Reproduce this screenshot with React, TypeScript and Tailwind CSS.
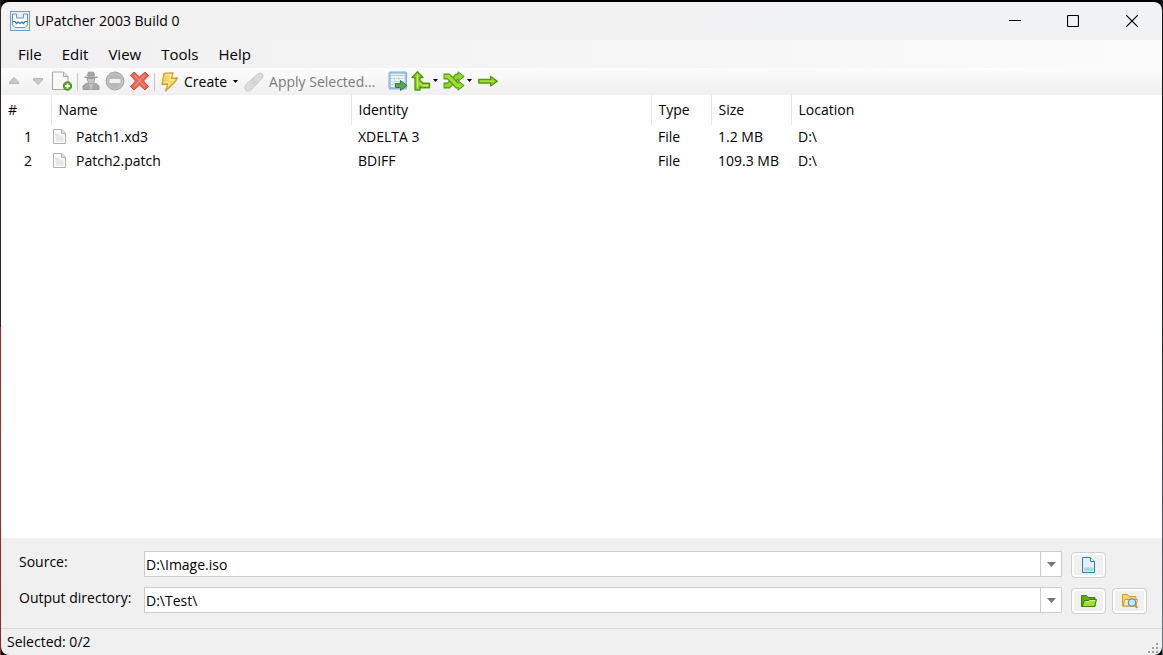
import React, { useState } from 'react';

const menus = ['File', 'Edit', 'View', 'Tools', 'Help'];

const patches = [
  { id: 1, name: 'Patch1.xd3', identity: 'XDELTA 3', type: 'File', size: '1.2 MB', location: 'D:\\' },
  { id: 2, name: 'Patch2.patch', identity: 'BDIFF', type: 'File', size: '109.3 MB', location: 'D:\\' },
];

const columns = [
  { label: 'Name', width: 'w-[300px]' },
  { label: 'Identity', width: 'w-[300px]' },
  { label: 'Type', width: 'w-[60px]' },
  { label: 'Size', width: 'w-[80px]' },
  { label: 'Location', width: 'w-auto' },
];

/* ---------- icons ---------- */

const AppLogo = () => (
  <svg className="size-5" viewBox="0 0 20 20" fill="none">
    <rect x="0.5" y="0.5" width="19" height="19" fill="#e6f0fa" stroke="#6d9fd3" />
    <path d="M2.500 3v11l2.500 2.500h10l2.500-2.500V3h-4v4h-7V3z" fill="#fff" stroke="#5f9ad6" />
    <path d="M3 10.500h2l1.500 2 1.500-1.500 2 1.500 2-1.500 1.500 1.500 1.500-2h2" stroke="#2f6fb4" strokeWidth="1.200" />
  </svg>
);

const UpIcon = () => (
  <svg className="size-5" viewBox="0 0 20 20">
    <path d="M10 6.500l4.500 4.500v1.500h-9V11z" fill="#c8c8c8" stroke="#b4b4b4" strokeLinejoin="round" />
  </svg>
);

const DownIcon = () => (
  <svg className="size-5" viewBox="0 0 20 20">
    <path d="M10 13.500L5.500 9V7.500h9V9z" fill="#c8c8c8" stroke="#b4b4b4" strokeLinejoin="round" />
  </svg>
);

const AddFileIcon = () => (
  <svg className="size-5" viewBox="0 0 20 20">
    <path d="M.5 1h11L16 5.500V18.500H.5z" fill="#f6f8f6" stroke="#a3a8a3" />
    <path d="M11.500 1v4.500H16" fill="#dfe3df" stroke="#a3a8a3" />
    <path d="M3 16.500V9l6-6" stroke="#fff" fill="none" />
    <circle cx="15.500" cy="15" r="4.200" fill="#5cab1c" stroke="#3c8a0c" />
    <path d="M15.500 12.500v5M13 15h5" stroke="#fff" strokeWidth="1.800" />
  </svg>
);

const AgentIcon = () => (
  <svg className="size-5" viewBox="0 0 20 20">
    <path d="M2 18.500v-3.500l3-2.500 3-.5h4l3 .5 3 2.500v3.500z" fill="#a9a9a9" stroke="#9b9b9b" />
    <path d="M6.500 6h7v3.500L12 12.500h-4L6.500 9.500z" fill="#c6c6c6" stroke="#a0a0a0" />
    <path d="M6.500 5L7.300 1.200h5.400L13.500 5z" fill="#a6a6a6" stroke="#979797" />
    <path d="M3.500 6q6.500 2 13 0" stroke="#999" strokeWidth="1.800" fill="none" />
    <path d="M8 12.500l2 3 2-3M10 15v3.500" stroke="#d8d8d8" fill="none" />
  </svg>
);

const ForbidIcon = () => (
  <svg className="size-5" viewBox="0 0 20 20">
    <circle cx="10" cy="10" r="9" fill="#b8b8b8" stroke="#a6a6a6" />
    <circle cx="10" cy="10" r="7.500" fill="none" stroke="#c6c6c6" />
    <rect x="4.500" y="8" width="11" height="4" rx="0.500" fill="#f0f0f0" />
  </svg>
);

const DeleteIcon = () => (
  <svg className="size-5" viewBox="0 0 20 20">
    <path
      d="M5 1L10.500 6 16 1l3.500 3.500L14.500 10l5 5.500L16 19l-5.500-5L5 19l-3.500-3.500L6.500 10l-5-5.500z"
      fill="#ee6352"
      stroke="#d8493b"
      strokeLinejoin="round"
    />
    <path d="M5 4l5.500 5.500L16 4M5 15.500l5.500-5.500 5.500 5.500" fill="none" stroke="#f58a78" strokeWidth="1.300" />
  </svg>
);

const BoltIcon = () => (
  <svg className="size-5" viewBox="0 0 20 20">
    <path
      d="M4 1.500L13 .8l-1.500 5.700 6-.5L15 10l-9.500 9 2.500-7-6 .5z"
      fill="#fbd35c"
      stroke="#dd9a2d"
      strokeWidth="1.300"
      strokeLinejoin="round"
    />
    <path d="M5.500 3.200l5.500-.5-1.500 5.500 5-.4M4.500 10.500l5-.4-1.200 4" fill="none" stroke="#fdf0a8" strokeWidth="1.200" />
  </svg>
);

const PlasterIcon = () => (
  <svg className="size-5" viewBox="0 0 20 20">
    <path d="M13 2.500q3.500-3 5.500-.5 1.500 2-1 5L8 17q-3.500 3.500-6.500.8-2.200-3 .8-5.800z" fill="#dcdcdc" stroke="#cbcbcb" />
    <path d="M6.500 9l4.500 4.500 3.500-3.500L10 5.500z" fill="#d0d0d0" />
    <path d="M8.500 9.500h1M10.500 7.800h1M10.500 11.500h1M12.500 9.500h1" stroke="#f0f0f0" strokeWidth="1.200" />
  </svg>
);

const ExportIcon = () => (
  <svg className="size-5" viewBox="0 0 20 20">
    <rect x="1" y="1" width="17.500" height="17" rx="1" fill="#a5c8ef" stroke="#86addd" />
    <rect x="3" y="3" width="13.500" height="13" fill="#fff" />
    <path d="M3 4.500h13.500" stroke="#b5d2a6" strokeWidth="1.500" />
    <path d="M3 7.500h13.500M3 10.500h13.500M3 13.500h13.500M6.500 6v10M11 6v10" stroke="#bdd5ef" />
    <path d="M7.500 12.500h5V9.500l6.500 5-6.500 5v-3h-5z" fill="#58a556" stroke="#3c7f3d" strokeLinejoin="round" />
  </svg>
);

const BranchIcon = () => (
  <svg className="size-5" viewBox="0 0 20 20">
    <path
      d="M6.500 .8L12 6.500H9V9.500L12 12.200H18.500V16.800H10.500L9 15.500V19H4V6.500H1z"
      fill="#93d429"
      stroke="#4f9a0d"
      strokeWidth="1.400"
      strokeLinejoin="round"
    />
    <path d="M6.500 3.500V17M8 12l3.500 2.500H17" fill="none" stroke="#c6ee6b" />
  </svg>
);

const ShuffleIcon = () => (
  <svg className="h-5 w-[22px]" viewBox="0 0 22 20">
    <path d="M.5 14.500h5l8.500-9h3" fill="none" stroke="#4f9a0d" strokeWidth="5.800" />
    <path d="M15 .8L21.200 5.500 15 10.200z" fill="#93d429" stroke="#4f9a0d" strokeLinejoin="round" />
    <path d="M1.500 14.500h4l8.500-9h3" fill="none" stroke="#93d429" strokeWidth="3.600" />
    <path d="M.5 5.500h5l8.500 9h3" fill="none" stroke="#4f9a0d" strokeWidth="5.800" />
    <path d="M15 9.800l6.200 4.700L15 19.200z" fill="#93d429" stroke="#4f9a0d" strokeLinejoin="round" />
    <path d="M1.500 5.500h4l8.500 9h3" fill="none" stroke="#a2dc36" strokeWidth="3.600" />
  </svg>
);

const ArrowIcon = () => (
  <svg className="size-5" viewBox="0 0 20 20">
    <path d="M.7 8.500h12V5.500L19.300 10.300l-6.600 4.700v-3H.7z" fill="#93d429" stroke="#4f9a0d" strokeWidth="1.300" strokeLinejoin="round" />
    <path d="M2 10.200h14" stroke="#b5e44f" />
  </svg>
);

const Caret = () => (
  <svg className="h-[3px] w-[5px]" viewBox="0 0 5 3">
    <path d="M0 0h5L2.500 3z" fill="#000" />
  </svg>
);

const PageIcon = () => (
  <svg className="h-4 w-[13px]" viewBox="0 0 13 16">
    <path d="M.5.500h8.500L12.500 4v10.500H.5z" fill="#fafafa" stroke="#b0b0b0" />
    <path d="M8.500.500V4.500h4" fill="#ddd" stroke="#b0b0b0" />
    <path d="M2.500 4.500h4v2h4v6h-8z" fill="#e6e6e6" />
  </svg>
);

const SourceFileIcon = () => (
  <svg className="size-4" viewBox="0 0 16 16">
    <path d="M1.500.500h8L13.500 4.500v11h-12z" fill="#e3f2fa" stroke="#2e7cad" />
    <path d="M9.500 .5V4.500h4" fill="#fff" stroke="#2e7cad" />
    <path d="M3 10.500h9v3.500H3z" fill="#a9d3e8" />
  </svg>
);

const OpenFolderIcon = () => (
  <svg className="size-4" viewBox="0 0 16 16">
    <path d="M.5 13.500v-11h5l1.500 2h7v9z" fill="#5fae10" stroke="#3c7d05" />
    <path d="M1 13.500l2.500-6h4l1-1h7l-2 7z" fill="#a4dd34" stroke="#3c7d05" strokeLinejoin="round" />
    <path d="M4 8.500h4l1-1h5" stroke="#d5f48a" fill="none" />
  </svg>
);

const SearchFolderIcon = () => (
  <svg className="size-4" viewBox="0 0 16 16">
    <path d="M.5 13V1.500h5l1.500 2h7V13z" fill="#f6cf7e" stroke="#d3963a" />
    <path d="M1 13l2-6.500h12.500L14 13z" fill="#fdeab6" stroke="#d3963a" strokeLinejoin="round" />
    <circle cx="10" cy="9.500" r="3.700" fill="#c4e6f8" stroke="#4b94c9" strokeWidth="1.200" />
    <path d="M13 12.500l2.300 2.300" stroke="#d9902b" strokeWidth="2.200" />
  </svg>
);

/* ---------- parts ---------- */

const TitleBar = () => (
  <header className="flex h-[38px] shrink-0 items-center bg-gradient-to-r from-[#f4f2f2] to-[#f0f2f4] pl-[9px]">
    <AppLogo />
    <h1 className="flex-1 pl-[5px]">UPatcher 2003 Build 0</h1>
    <button type="button" aria-label="Minimize" className="flex h-full w-[58px] items-center justify-center">
      <svg className="size-3" viewBox="0 0 12 12">
        <path d="M0 5.500h12" stroke="#000" />
      </svg>
    </button>
    <button type="button" aria-label="Maximize" className="flex h-full w-[58px] items-center justify-center">
      <svg className="size-3" viewBox="0 0 12 12" fill="none">
        <rect x="0.500" y="0.500" width="11" height="11" rx="1" stroke="#000" strokeWidth="1.200" />
      </svg>
    </button>
    <button type="button" aria-label="Close" className="flex h-full w-[60px] items-center justify-center">
      <svg className="size-3" viewBox="0 0 12 12" fill="none">
        <path d="M0 0l12 12M12 0L0 12" stroke="#000" strokeWidth="1.200" />
      </svg>
    </button>
  </header>
);

const MenuBar = () => (
  <nav className="flex h-7 shrink-0 items-center bg-gradient-to-r from-[#f0f0f0] to-[#fbfbfb] pl-[7px]">
    {menus.map((menu) => (
      <button key={menu} type="button" className="h-full px-2.5 text-[15px]">
        {menu}
      </button>
    ))}
  </nav>
);

const ToolButton: React.FC<{ label: string; disabled?: boolean; children: React.ReactNode }> = ({
  label,
  disabled,
  children,
}) => (
  <button
    type="button"
    aria-label={label}
    disabled={disabled}
    className="flex h-6 w-6 items-center justify-center pb-0.5"
  >
    {children}
  </button>
);

const Separator = () => <span className="mr-px ml-[3px] h-[18px] w-px bg-[#c5c5c5]" />;

const Toolbar = () => (
  <div className="flex h-[27px] shrink-0 items-center bg-gradient-to-b from-[#fcfcfc] to-[#f0f0f0] pl-px">
    <ToolButton label="Move up" disabled>
      <UpIcon />
    </ToolButton>
    <ToolButton label="Move down" disabled>
      <DownIcon />
    </ToolButton>
    <ToolButton label="Add patch">
      <AddFileIcon />
    </ToolButton>
    <Separator />
    <ToolButton label="Identify" disabled>
      <AgentIcon />
    </ToolButton>
    <ToolButton label="Remove" disabled>
      <ForbidIcon />
    </ToolButton>
    <ToolButton label="Remove all">
      <DeleteIcon />
    </ToolButton>
    <Separator />
    <button type="button" className="flex h-6 items-center gap-1 px-1">
      <BoltIcon />
      Create
      <span className="px-0.5">
        <Caret />
      </span>
    </button>
    <button type="button" disabled className="flex h-6 items-center gap-[5px] pr-[11px] text-[#7a7a7a]">
      <PlasterIcon />
      Apply Selected...
    </button>
    <ToolButton label="Export list">
      <ExportIcon />
    </ToolButton>
    <button type="button" aria-label="Branch" className="flex h-6 items-center gap-0.5 px-px pb-0.5">
      <BranchIcon />
      <Caret />
    </button>
    <button type="button" aria-label="Shuffle" className="flex h-6 items-center gap-0.5 px-1 pb-0.5">
      <ShuffleIcon />
      <Caret />
    </button>
    <ToolButton label="Go">
      <ArrowIcon />
    </ToolButton>
  </div>
);

const PatchTable = () => (
  <main className="flex-1 bg-white">
    <table className="w-full table-fixed border-collapse text-left">
      <thead>
        <tr className="h-[30px]">
          <th className="w-[50px] pl-[7px] font-normal">#</th>
          {columns.map((col) => (
            <th key={col.label} className={`${col.width} border-l border-[#e5e5e5] pl-[7px] font-normal`}>
              {col.label}
            </th>
          ))}
        </tr>
      </thead>
      <tbody>
        {patches.map((patch) => (
          <tr key={patch.id} className="h-6">
            <td className="pr-[19px] text-right">{patch.id}</td>
            <td className="pl-0.5">
              <span className="flex items-center gap-2.5">
                <PageIcon />
                {patch.name}
              </span>
            </td>
            <td className="pl-[7px]">{patch.identity}</td>
            <td className="pl-[7px]">{patch.type}</td>
            <td className="pl-[7px] whitespace-nowrap">{patch.size}</td>
            <td className="pl-[7px]">{patch.location}</td>
          </tr>
        ))}
      </tbody>
    </table>
  </main>
);

const PathBox: React.FC<{ id: string; initial: string }> = ({ id, initial }) => {
  const [value, setValue] = useState(initial);
  return (
    <div className="flex h-[26px] flex-1 border border-[#cccccc] bg-white">
      <input
        id={id}
        type="text"
        value={value}
        onChange={(e) => setValue(e.target.value)}
        className="min-w-0 flex-1 px-px pt-px outline-none"
      />
      <button
        type="button"
        aria-label="Show recent paths"
        className="flex w-[21px] items-center justify-center border-l border-[#cccccc]"
      >
        <svg className="h-[5px] w-[9px]" viewBox="0 0 9 5">
          <path d="M0 0h9L4.500 5z" fill="#777" />
        </svg>
      </button>
    </div>
  );
};

const IconButton: React.FC<{ label: string; children: React.ReactNode }> = ({ label, children }) => (
  <button
    type="button"
    aria-label={label}
    className="mt-px flex h-[26px] w-[35px] items-center justify-center rounded border border-[#cfcfcf] bg-[#f0f0f0] ring-2 ring-white ring-inset"
  >
    {children}
  </button>
);

const PathsPanel = () => (
  <section className="flex shrink-0 flex-col gap-2.5 bg-[#f0f0f0] pt-[13px] pr-[15px] pb-[15px] pl-[18px]">
    <div className="flex h-[26px] items-start">
      <label htmlFor="source" className="w-[125px]">
        Source:
      </label>
      <PathBox id="source" initial="D:\Image.iso" />
      <div className="flex w-[85px] gap-1.5 pl-[9px]">
        <IconButton label="Browse for source file">
          <SourceFileIcon />
        </IconButton>
      </div>
    </div>
    <div className="flex h-[26px] items-start">
      <label htmlFor="output" className="w-[125px] whitespace-nowrap">
        Output directory:
      </label>
      <PathBox id="output" initial="D:\Test\" />
      <div className="flex w-[85px] gap-1.5 pl-[9px]">
        <IconButton label="Browse for output directory">
          <OpenFolderIcon />
        </IconButton>
        <IconButton label="Explore output directory">
          <SearchFolderIcon />
        </IconButton>
      </div>
    </div>
  </section>
);

const StatusBar = () => (
  <footer className="flex h-[27px] shrink-0 items-center justify-between border-t border-[#d7d7d7] bg-[#f0f0f0] pl-1.5">
    <span>Selected: 0/2</span>
    <svg className="mr-0.5 size-3 self-end" viewBox="0 0 12 12" fill="#a0a0a0">
      <path d="M8 0h2v2H8zM4 4h2v2H4zM8 4h2v2H8zM0 8h2v2H0zM4 8h2v2H4zM8 8h2v2H8z" />
    </svg>
  </footer>
);

export default function App() {
  return (
    <div className="flex min-h-screen bg-black">
      {/* desktop colours showing past the window's edges */}
      <span className="w-px bg-linear-to-b from-[#2a2628] from-50% via-[#a82c30] via-50% to-[#8c2a2e]" />
      <div className="mt-0.5 flex flex-1 flex-col overflow-hidden rounded-lg font-['Open_Sans',sans-serif] text-[14px] leading-[22px] text-black">
        <TitleBar />
        <MenuBar />
        <Toolbar />
        <PatchTable />
        <PathsPanel />
        <StatusBar />
      </div>
      <span className="w-px bg-linear-to-b from-[#141618] from-40% to-[#70757a]" />
    </div>
  );
}
